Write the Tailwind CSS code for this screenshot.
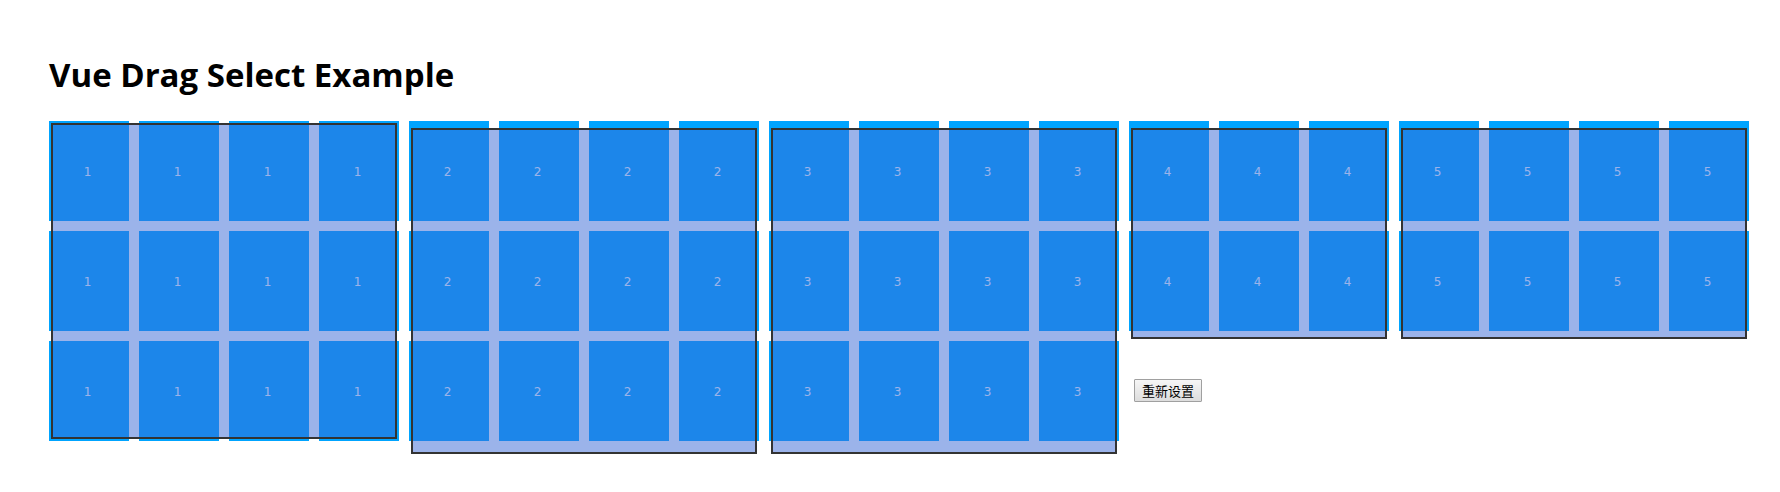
<!DOCTYPE html>
<html lang="en">
<head>
<meta charset="utf-8">
<title>Vue Drag Select Example</title>
<script src="https://cdn.jsdelivr.net/npm/@tailwindcss/browser@4"></script>
</head>
<body class="bg-white font-['DejaVu_Sans','Noto_Sans_CJK_SC',sans-serif] text-black">
<main class="pl-[49px] pt-[51px] pr-[30px] pb-12">
  <h1 class="mb-[22px] font-['Open_Sans',sans-serif] text-[33px] leading-12 font-bold">Vue Drag Select Example</h1>
  <div class="flex items-start gap-[10px]" id="board">
    <section class="relative grid shrink-0 grid-cols-[repeat(4,80px)] gap-[10px]" data-label="1" data-count="12">
      <div class="absolute inset-[2px] border-2 border-[#333] bg-[#3868d6]/50"></div>
    </section>
    <section class="relative grid shrink-0 grid-cols-[repeat(4,80px)] gap-[10px]" data-label="2" data-count="12">
      <div class="absolute inset-x-[2px] top-[7px] -bottom-[13px] border-2 border-[#333] bg-[#3868d6]/50"></div>
    </section>
    <section class="relative grid shrink-0 grid-cols-[repeat(4,80px)] gap-[10px]" data-label="3" data-count="12">
      <div class="absolute inset-x-[2px] top-[7px] -bottom-[13px] border-2 border-[#333] bg-[#3868d6]/50"></div>
    </section>
    <div class="flex shrink-0 flex-col items-start gap-12">
      <section class="relative grid grid-cols-[repeat(3,80px)] gap-[10px]" data-label="4" data-count="6">
        <div class="absolute inset-x-[2px] top-[7px] -bottom-[8px] border-2 border-[#333] bg-[#3868d6]/50"></div>
      </section>
      <button type="button" class="ml-[5px] rounded-[1px] border border-[#a0a0a0] bg-linear-to-b from-[#f6f6f6] to-[#dddddd] px-[7px] py-px font-['Noto_Sans_CJK_SC',sans-serif] text-[13px] leading-[19px]">重新设置</button>
    </div>
    <section class="relative grid shrink-0 grid-cols-[repeat(4,80px)] gap-[10px]" data-label="5" data-count="8">
      <div class="absolute inset-x-[2px] top-[7px] -bottom-[8px] border-2 border-[#333] bg-[#3868d6]/50"></div>
    </section>
  </div>
</main>
<script>
  // Fill every group with its selectable cells, beneath the selection box.
  document.querySelectorAll('section').forEach(group => {
    const box = group.firstElementChild;
    for (let i = 0; i < Number(group.dataset.count); i++) {
      const cell = document.createElement('div');
      cell.className = 'flex h-[100px] items-center justify-center bg-[#00a4ff] pt-[2px] pr-[3px] text-[12px] leading-4 text-white';
      cell.textContent = group.dataset.label;
      group.insertBefore(cell, box);
    }
  });
</script>
</body>
</html>
